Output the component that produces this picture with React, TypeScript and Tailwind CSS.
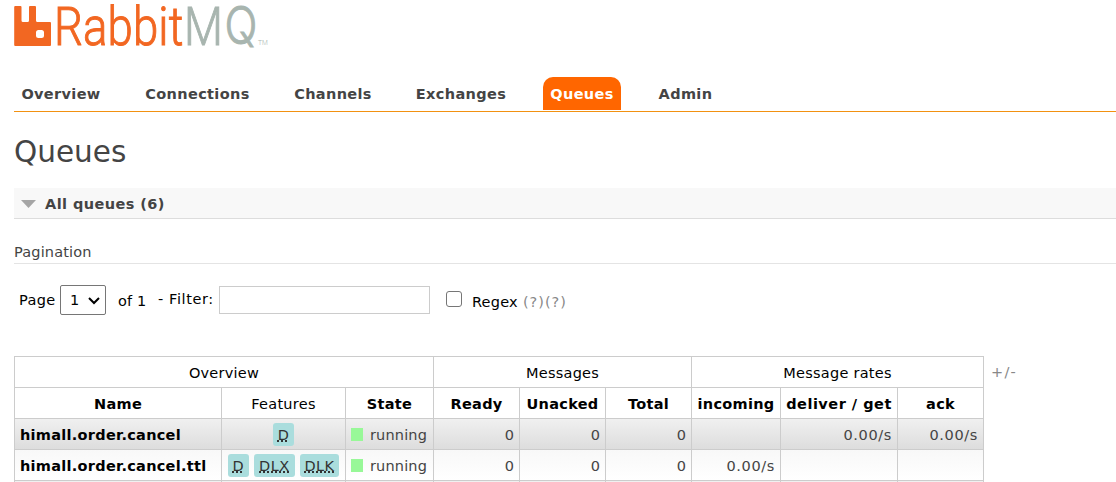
import React from "react";

const tabs = [
  { label: "Overview", cls: "w-[94px]" },
  { label: "Connections", cls: "w-[119px]" },
  { label: "Channels", cls: "w-[92px]" },
  { label: "Exchanges", cls: "w-[104px]" },
  { label: "Queues", cls: "w-[78px]", active: true },
  { label: "Admin", cls: "w-[69px]" },
];

const queues = [
  { name: "himall.order.cancel", features: ["D"], incoming: "", get: "0.00/s", ack: "0.00/s" },
  { name: "himall.order.cancel.ttl", features: ["D", "DLX", "DLK"], incoming: "0.00/s", get: "", ack: "" },
];

function Logo() {
  return (
    <svg width="260" height="50" viewBox="0 0 260 50" className="block overflow-visible" role="img" aria-label="RabbitMQ">
      <path
        fill="#f26722"
        d="M1.200 3H6.500a1 1 0 0 1 1 1v13.500a1.500 1.500 0 0 0 1.500 1.500h4.500a1.500 1.500 0 0 0 1.500-1.500V4a1 1 0 0 1 1-1h5a1 1 0 0 1 1 1v13.500a1.500 1.500 0 0 0 1.500 1.500h12.500a1 1 0 0 1 1 1V42a1 1 0 0 1-1 1H1.200a1 1 0 0 1-1-1V4a1 1 0 0 1 1-1ZM24.500 27a2.500 2.500 0 0 0-2.500 2.500v3a2.500 2.500 0 0 0 2.500 2.500h3a2.500 2.500 0 0 0 2.500-2.500v-3a2.500 2.500 0 0 0-2.500-2.500Z"
        fillRule="evenodd"
      />
      <text x="40" y="42" fontSize="54.500" fontFamily="Roboto" fontWeight="300" fill="#f26722" stroke="#f26722" strokeWidth="1" textLength="129.500" lengthAdjust="spacingAndGlyphs">Rabbit</text>
      <text x="170" y="42" fontSize="54.500" fontFamily="Roboto" fontWeight="300" fill="#a8b5af" stroke="#a8b5af" strokeWidth="1" textLength="39" lengthAdjust="spacingAndGlyphs">M</text>
      <text x="210.500" y="41" fontSize="52" fontFamily="Inter" fontWeight="300" fill="#a8b5af" stroke="#a8b5af" strokeWidth="0.900" textLength="33" lengthAdjust="spacingAndGlyphs">Q</text>
      <text x="244" y="42" fontSize="8" fontFamily="Roboto" fontWeight="300" fill="#a8b5af" textLength="10" lengthAdjust="spacingAndGlyphs">TM</text>
    </svg>
  );
}

function Feature({ label }: { label: string }) {
  return (
    <span className="inline-flex h-[23px] items-center rounded-[3px] bg-[#aadddd] px-[5px] text-[#333]">
      <abbr className="pt-px tracking-[0.400px] underline decoration-dotted decoration-[1.5px] underline-offset-[1px]">{label}</abbr>
    </span>
  );
}

const cell = "h-[31px] border-r border-b border-[#ccc] p-0 ";

export default function App() {
  return (
    <main className="h-[482px] w-[1116px] overflow-hidden bg-white pl-[14px] font-['DejaVu_Sans',Verdana,sans-serif] text-[14.500px] leading-[18px] tracking-[0.150px] text-[#444]">
      <header className="pt-[3px]">
        <div className="h-[74px]"><Logo /></div>
        <nav className="flex h-[35px] gap-[30px] border-b border-[#f29111] font-bold tracking-[0.350px]">
          {tabs.map((t) => (
            <a key={t.label} className={"flex h-[33px] shrink-0 items-center justify-center whitespace-nowrap rounded-t-[10px] pt-[1px] " + t.cls + (t.active ? " bg-[#ff6600] text-white" : "")}>
              {t.label}
            </a>
          ))}
        </nav>
      </header>

      <h1 className="flex h-[76px] items-center pt-[3px] text-[29.500px] tracking-[0px]">Queues</h1>

      <h2 className="flex h-[31px] items-center border-b border-[#ddd] bg-[#f8f8f8] pl-[7px] font-bold tracking-[0.420px]">
        <svg width="15" height="9" className="mr-[9px] mt-[2px]"><path d="M0 0H15L7.500 8Z" fill="#a5a5a5" /></svg>
        <span className="pt-[2px]">All queues (6)</span>
      </h2>

      <h3 className="mt-[22px] flex h-[23px] items-center border-b border-[#e4e4e4]">Pagination</h3>

      <form className="mt-[20px] flex h-[32px] items-center pl-[5px] text-black">
        <span className="w-[36px] tracking-[0.350px]">Page</span>
        <button type="button" className="ml-[5px] flex h-[30px] w-[46px] shrink-0 items-center rounded-[2px] border border-[#767676] pl-[9px]">
          1
          <svg width="12" height="8" className="ml-[9px] mt-[1px]" fill="none" stroke="#000" strokeWidth="2"><path d="M1 1L6 6L11 1" /></svg>
        </button>
        <span className="ml-[12px] w-[29px] whitespace-nowrap pt-[2px]">of 1</span>
        <span className="ml-[11px] w-[57px] whitespace-nowrap pb-[2px] tracking-[0.600px]">- Filter:</span>
        <input className="ml-[4px] h-[28px] w-[211px] border border-[#ccc]" />
        <span className="ml-[16px] mb-[2px] size-4 rounded-[3px] border border-[#767676]" />
        <span className="ml-[10px] w-[46px] pt-[4px] tracking-[0.200px]">Regex</span>
        <span className="ml-[5px] w-[22px] pt-[4px] tracking-[0.900px] text-[#888]">(?)</span>
        <span className="pt-[3px] tracking-[0.900px] text-[#888]">(?)</span>
      </form>

      <section className="mt-[40px] flex items-start">
        <table className="w-[970px] shrink-0 table-fixed border-separate border-spacing-0 border-t border-l border-[#ccc]">
          <colgroup>
            <col className="w-[207px]" />
            <col className="w-[124px]" />
            <col className="w-[88px]" />
            <col className="w-[86px]" />
            <col className="w-[86px]" />
            <col className="w-[86px]" />
            <col className="w-[89px]" />
            <col className="w-[117px]" />
            <col className="w-[86px]" />
          </colgroup>
          <thead className="text-black">
            <tr className="tracking-[0.250px]">
              <th colSpan={3} className={cell + "pt-[2px] font-normal"}>Overview</th>
              <th colSpan={3} className={cell + "pt-[2px] font-normal"}>Messages</th>
              <th colSpan={3} className={cell + "pt-[2px] font-normal"}>Message rates</th>
            </tr>
            <tr className="whitespace-nowrap tracking-[0.300px]">
              <th className={cell + "pt-[2px]"}>Name</th>
              <th className={cell + "pt-[2px] font-normal"}>Features</th>
              <th className={cell + "pt-[2px]"}>State</th>
              <th className={cell + "pt-[2px]"}>Ready</th>
              <th className={cell + "pt-[2px]"}>Unacked</th>
              <th className={cell + "pt-[2px]"}>Total</th>
              <th className={cell + "pt-[2px]"}>incoming</th>
              <th className={cell + "pt-[2px] tracking-[0.500px]"}>deliver / get</th>
              <th className={cell + "pt-[2px]"}>ack</th>
            </tr>
          </thead>
          <tbody>
            {queues.map((q, i) => {
              const c = cell + (i === 0 ? "bg-linear-to-b from-[#f0f0f0] to-[#dddddd] " : "bg-linear-to-b from-[#f8f8f8] to-white ");
              const num = c + "pt-[2px] pr-[5px] text-right";
              return (
                <tr key={q.name} className="whitespace-nowrap">
                  <td className={c + "pt-[2px] pl-[5px] font-bold tracking-[0.280px] text-black"}>{q.name}</td>
                  <td className={c}>
                    <div className="flex justify-center gap-[5px]">
                      {q.features.map((f) => <Feature key={f} label={f} />)}
                    </div>
                  </td>
                  <td className={c}>
                    <div className="flex items-center pl-[5px]">
                      <span className="mr-[7px] h-[13px] w-[12px] bg-[#98f898]" />
                      <span className="pt-[2px]">running</span>
                    </div>
                  </td>
                  <td className={num}>0</td>
                  <td className={num}>0</td>
                  <td className={num}>0</td>
                  <td className={num + " tracking-[0.650px]"}>{q.incoming}</td>
                  <td className={num + " tracking-[0.650px]"}>{q.get}</td>
                  <td className={num + " tracking-[0.650px]"}>{q.ack}</td>
                </tr>
              );
            })}
            <tr>
              {[0, 1, 2, 3, 4, 5, 6, 7, 8].map((n) => <td key={n} className={cell + "bg-[#f0f0f0]"} />)}
            </tr>
          </tbody>
        </table>
        <span className="ml-[7px] mt-[7px] tracking-[1.200px] text-[#888]">+/-</span>
      </section>
    </main>
  );
}
